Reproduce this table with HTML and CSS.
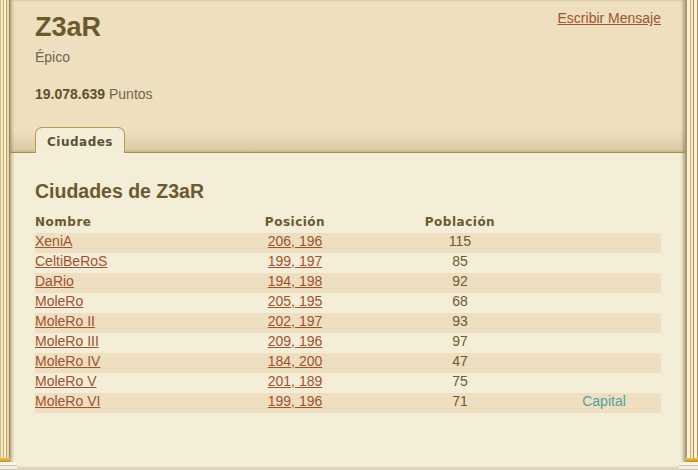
FILE: index.html
```html
<!DOCTYPE html>
<html lang="es">
<head>
<meta charset="utf-8">
<title>Z3aR</title>
<link rel="stylesheet" href="styles.css">
</head>
<body>
<div class="frame">
  <div class="pillar pillar-left">
    <div class="shaft"></div>
    <div class="ring"></div>
    <div class="base"></div>
  </div>
  <main class="main">
    <section class="top">
      <div class="profile">
        <div class="who">
          <h1 class="name">Z3aR</h1>
          <p class="rank">Épico</p>
          <p class="points"><b>19.078.639</b> Puntos</p>
        </div>
        <a class="msg" href="#">Escribir Mensaje</a>
      </div>
      <div class="tabs">
        <div class="tab">Ciudades</div>
      </div>
    </section>
    <section class="content">
      <h2 class="heading">Ciudades de Z3aR</h2>
      <table class="cities">
        <colgroup>
          <col class="c1"><col class="c2"><col class="c3"><col class="c4">
        </colgroup>
        <thead>
          <tr><th class="left">Nombre</th><th>Posición</th><th>Población</th><th></th></tr>
        </thead>
        <tbody>
          <tr><td class="left"><a href="#">XeniA</a></td><td><a href="#">206, 196</a></td><td>115</td><td></td></tr>
          <tr><td class="left"><a href="#">CeltiBeRoS</a></td><td><a href="#">199, 197</a></td><td>85</td><td></td></tr>
          <tr><td class="left"><a href="#">DaRio</a></td><td><a href="#">194, 198</a></td><td>92</td><td></td></tr>
          <tr><td class="left"><a href="#">MoleRo</a></td><td><a href="#">205, 195</a></td><td>68</td><td></td></tr>
          <tr><td class="left"><a href="#">MoleRo II</a></td><td><a href="#">202, 197</a></td><td>93</td><td></td></tr>
          <tr><td class="left"><a href="#">MoleRo III</a></td><td><a href="#">209, 196</a></td><td>97</td><td></td></tr>
          <tr><td class="left"><a href="#">MoleRo IV</a></td><td><a href="#">184, 200</a></td><td>47</td><td></td></tr>
          <tr><td class="left"><a href="#">MoleRo V</a></td><td><a href="#">201, 189</a></td><td>75</td><td></td></tr>
          <tr><td class="left"><a href="#">MoleRo VI</a></td><td><a href="#">199, 196</a></td><td>71</td><td class="capital">Capital</td></tr>
        </tbody>
      </table>
    </section>
  </main>
  <div class="pillar pillar-right">
    <div class="shaft"></div>
    <div class="ring"></div>
    <div class="base"></div>
  </div>
</div>
</body>
</html>
```

FILE: styles.css
```css
html, body {
  margin: 0;
  padding: 0;
}
body {
  width: 698px;
  height: 470px;
  overflow: hidden;
  background: #F4EDD7;
  font-family: "Liberation Sans", Arial, sans-serif;
  font-size: 14px;
  color: #6B5B35;
}
.frame {
  display: flex;
  height: 470px;
}
.pillar {
  display: flex;
  flex-direction: column;
  position: relative;
  z-index: 2;
}
.pillar-left { width: 10px; align-items: flex-start; }
.pillar-right { width: 13px; align-items: flex-end; }
.shaft { flex: 1; width: 100%; }
.pillar-left .shaft {
  background: linear-gradient(to right,
    #D6C28E 0 1px, #F3E7BE 1px 3px, #C9AE78 3px 4px, #FBF3D6 4px 6px,
    #BFA373 6px 7px, #EAD9AD 7px 9px, #9E8658 9px 10px);
}
.pillar-right .shaft {
  background: linear-gradient(to right,
    #A99A7A 0 2px, #FBF3D0 2px 5px, #C8AE78 5px 6px, #F6EBC6 6px 8px,
    #A88D5A 8px 9px, #FBF3D3 9px 12px, #A48A5C 12px 13px);
}
.ring {
  height: 4px;
  width: 100%;
  background: linear-gradient(to bottom, #F2C24A, #C8901A);
}
.base {
  height: 8px;
  background: linear-gradient(to bottom, #F7F3E8 0 3px, #CFC8B6 3px 4px, #F2EEE2 4px 7px, #C9C2B0 7px 8px);
}
.pillar-left .base { width: 17px; margin-right: -7px; }
.pillar-right .base { width: 19px; margin-left: -6px; }

.main {
  flex: 1;
  display: flex;
  flex-direction: column;
  box-shadow: inset 3px 0 3px -1px rgba(110, 90, 50, 0.45), inset -3px 0 3px -1px rgba(110, 90, 50, 0.45);
  border-bottom: 2px solid #DCD4BF;
  position: relative;
  z-index: 1;
}
.top {
  height: 152px;
  border-bottom: 1px solid #A58C44;
  background: linear-gradient(to bottom, #EEDFBE 0, #EEDFBE 130px, #D9C9A3 152px);
  display: flex;
  flex-direction: column;
  justify-content: space-between;
  box-shadow: inherit;
}
.profile {
  display: flex;
  justify-content: space-between;
  align-items: flex-start;
  padding: 9px 24px 0 25px;
}
.name {
  margin: 2px 0 0;
  font-size: 27px;
  line-height: 32px;
  font-weight: bold;
  color: #6B5A2C;
}
.rank {
  margin: 5px 0 0;
  line-height: 18px;
  color: #6E6652;
}
.points {
  margin: 19px 0 0;
  line-height: 18px;
  color: #6E6652;
}
.points b {
  color: #5E5030;
}
.msg {
  line-height: 18px;
  color: #A0522D;
  text-decoration: underline;
}
.tabs {
  display: flex;
  padding-left: 25px;
}
.tab {
  box-sizing: border-box;
  width: 90px;
  height: 26px;
  margin-bottom: -1px;
  padding-top: 7px;
  border: 1px solid #B49A55;
  border-bottom: none;
  border-radius: 7px 7px 0 0;
  background: #F4EDD7;
  text-align: center;
  font-family: "DejaVu Sans", Verdana, sans-serif;
  font-weight: bold;
  font-size: 12px;
  line-height: 14px;
  letter-spacing: 0.5px;
  color: #5C5039;
}
.content {
  padding: 26px 24px 0 25px;
}
.heading {
  margin: 0;
  font-size: 19.5px;
  line-height: 24px;
  font-weight: bold;
  color: #6B5A2E;
}
.cities {
  margin-top: 12px;
  width: 626px;
  border-collapse: collapse;
  table-layout: fixed;
}
.c1 { width: 182px; }
.c2 { width: 156px; }
.c3 { width: 174px; }
.c4 { width: 114px; }
.cities th {
  padding: 0 0 4px;
  font-family: "DejaVu Sans", Verdana, sans-serif;
  font-weight: bold;
  font-size: 12px;
  line-height: 14px;
  letter-spacing: 0.5px;
  color: #6B5A30;
  text-align: center;
}
.cities td {
  padding: 0 0 3px;
  line-height: 17px;
  text-align: center;
  white-space: nowrap;
  color: #6B5B35;
}
.cities .left {
  text-align: left;
}
.cities tbody tr:nth-child(odd) {
  background: #EEDFC0;
}
.cities a {
  color: #A0522D;
  text-decoration: underline;
}
.cities .capital {
  color: #55A0A0;
}
```
